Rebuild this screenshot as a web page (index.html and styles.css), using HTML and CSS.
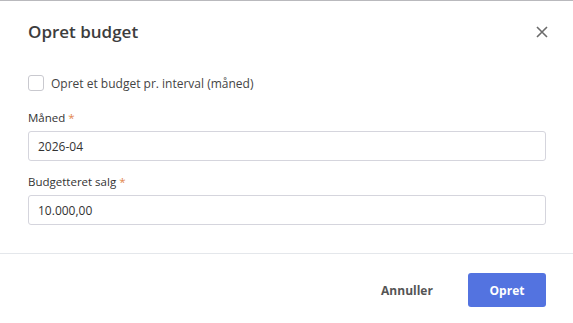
FILE: index.html
```html
<!DOCTYPE html>
<html lang="da">
<head>
<meta charset="utf-8">
<title>Opret budget</title>
<link rel="stylesheet" href="styles.css">
</head>
<body>
<div class="modal">
  <div class="modal-header">
    <h2 class="modal-title">Opret budget</h2>
    <button class="close" aria-label="Luk">
      <svg width="12" height="12" viewBox="0 0 12 12"><path d="M1 1L11 11M11 1L1 11" stroke="#6b6b6b" stroke-width="1.6" fill="none"/></svg>
    </button>
  </div>
  <div class="modal-body">
    <label class="check-row">
      <span class="checkbox"></span>
      <span class="check-label">Opret et budget pr. interval (måned)</span>
    </label>
    <div class="field">
      <div class="field-label">Måned <span class="req">*</span></div>
      <div class="input">2026-04</div>
    </div>
    <div class="field">
      <div class="field-label">Budgetteret salg <span class="req">*</span></div>
      <div class="input">10.000,00</div>
    </div>
  </div>
  <div class="modal-footer">
    <button class="btn btn-cancel">Annuller</button>
    <button class="btn btn-primary">Opret</button>
  </div>
</div>
</body>
</html>
```
FILE: styles.css
```css
* { box-sizing: border-box; }
html, body { margin: 0; padding: 0; background: #fff; }
body {
  font-family: "Open Sans", "Noto Sans", "Liberation Sans", sans-serif;
  color: #333;
  width: 573px;
  height: 323px;
  overflow: hidden;
}
.modal {
  border-top: 1px solid #b9b9bd;
  height: 323px;
}
.modal-header {
  display: flex;
  align-items: center;
  justify-content: space-between;
  padding: 18px 24px 0 28px;
  height: 43px;
}
.modal-title {
  margin: 0;
  font-size: 17px;
  line-height: 24px;
  font-weight: 600;
  color: #3d3d3d;
}
.close {
  border: 0;
  background: none;
  padding: 0;
  width: 12px;
  height: 12px;
  margin-right: 1px;
  display: flex;
}
.modal-body {
  padding: 29px 27px 0 28px;
}
.check-row {
  display: flex;
  align-items: center;
  gap: 7px;
  height: 20px;
}
.checkbox {
  width: 16px;
  height: 16px;
  border: 1px solid #c9c9cf;
  border-radius: 3px;
  background: #fff;
}
.check-label {
  font-size: 12px;
  color: #444;
}
.field { margin-top: 16px; }
.field + .field { margin-top: 12px; }
.field-label {
  font-size: 11.5px;
  line-height: 18px;
  font-weight: 500;
  color: #333;
  margin-bottom: 4px;
}
.req { color: #e2874f; }
.input {
  height: 30px;
  border: 1px solid #d5d5dd;
  border-radius: 3px;
  padding: 0 9px;
  display: flex;
  align-items: center;
  font-size: 12px;
  color: #333;
}
.modal-footer {
  margin-top: 28px;
  border-top: 1px solid #e4e7eb;
  display: flex;
  justify-content: flex-end;
  align-items: center;
  gap: 22px;
  padding: 19px 27px 0 0;
}
.btn {
  font-family: inherit;
  font-size: 12px;
  font-weight: 700;
  height: 34px;
  border-radius: 3px;
  border: 0;
  cursor: pointer;
}
.btn-cancel {
  background: none;
  color: #555;
  width: 78px;
}
.btn-primary {
  background: #5373e0;
  color: #fff;
  width: 78px;
}
```
